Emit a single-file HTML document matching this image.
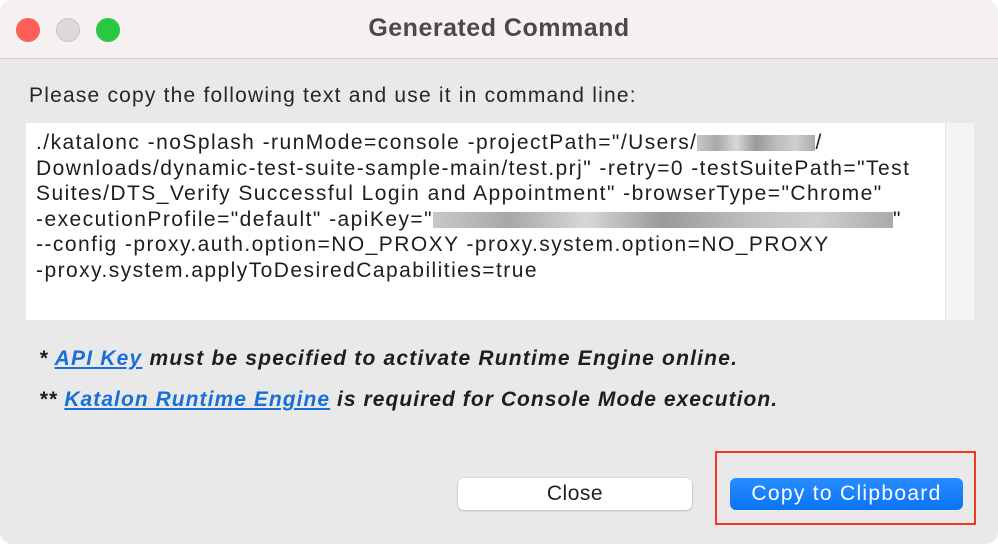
<!DOCTYPE html>
<html><head><meta charset="utf-8"><style>
body{margin:0;width:998px;height:544px;overflow:hidden;background:#fff;font-family:"Liberation Sans",sans-serif;}
.win{position:absolute;left:0;top:0;width:998px;height:544px;background:#e9e9e9;border-radius:12px;overflow:hidden;}
.tb{position:absolute;left:0;top:0;width:998px;height:58px;background:#f6f1f1;border-bottom:1px solid #cfcccc;}
.dot{position:absolute;top:18px;width:24px;height:24px;border-radius:50%;}
.title{position:absolute;left:0;width:998px;top:14px;text-align:center;font-size:25px;letter-spacing:0.5px;font-weight:bold;color:#4a4a4a;}
.p{position:absolute;left:29px;top:84px;font-size:21px;letter-spacing:1.2px;color:#262626;}
.ta{position:absolute;left:26px;top:123px;width:919px;height:197px;background:#fff;}
.sb{position:absolute;left:945px;top:123px;width:28px;height:197px;background:#f4f4f4;border-left:1px solid #e3e3e3;}
.code{position:absolute;left:36px;top:130px;font-size:21px;letter-spacing:1.45px;line-height:25.6px;color:#1e1e1e;white-space:pre;}
.blur{display:inline-block;height:16px;vertical-align:-2px;background:linear-gradient(90deg,#c8c8c8,#a8a8a8,#d8d8d8,#999,#bbb,#d0d0d0,#aaa);}
.n{position:absolute;left:39px;font-size:21px;font-weight:bold;font-style:italic;color:#1e1e1e;}
.n a{color:#1a6fd6;text-decoration:underline;}
.btn{position:absolute;top:478px;height:32px;border-radius:6px;font-size:20px;text-align:center;line-height:32px;}
</style></head><body><div class="win">
<div class="tb">
<div class="dot" style="left:16px;background:#fe5f57;"></div>
<div class="dot" style="left:56px;background:#dedada;border:1px solid #c8c4c4;width:22px;height:22px;"></div>
<div class="dot" style="left:96px;background:#28c840;"></div>
<div class="title">Generated Command</div>
</div>
<div class="p">Please copy the following text and use it in command line:</div>
<div class="ta"></div><div class="sb"></div>
<div class="code">./katalonc -noSplash -runMode=console -projectPath="/Users/<span class="blur" style="width:118px"></span>/
Downloads/dynamic-test-suite-sample-main/test.prj" -retry=0 -testSuitePath="Test
Suites/DTS_Verify Successful Login and Appointment" -browserType="Chrome"
-executionProfile="default" -apiKey="<span class="blur" style="width:460px"></span>"
--config -proxy.auth.option=NO_PROXY -proxy.system.option=NO_PROXY
-proxy.system.applyToDesiredCapabilities=true</div>
<div class="n" style="top:347px;letter-spacing:1.2px">* <a>API Key</a> must be specified to activate Runtime Engine online.</div>
<div class="n" style="top:388px;letter-spacing:1.05px">** <a>Katalon Runtime Engine</a> is required for Console Mode execution.</div>
<div class="btn" style="left:458px;width:234px;background:#fff;color:#222;box-shadow:0 0.5px 2px rgba(0,0,0,.3);font-size:21px;letter-spacing:0.5px;">Close</div>
<div style="position:absolute;left:715px;top:451px;width:261px;height:74px;border:2px solid #f03a20;box-sizing:border-box;"></div>
<div class="btn" style="left:730px;width:233px;background:linear-gradient(#2a8cff,#0a74f5);color:#fff;font-size:21px;letter-spacing:1.3px;">Copy to Clipboard</div>
</div></body></html>
